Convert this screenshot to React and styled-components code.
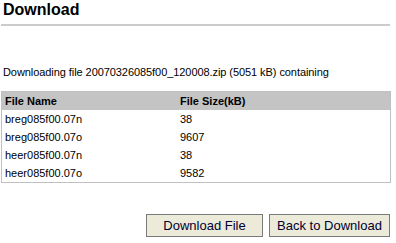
import React from 'react'
import styled, { createGlobalStyle } from 'styled-components'

const GlobalStyle = createGlobalStyle`
  html, body {
    margin: 0;
    padding: 0;
    background: #ffffff;
  }
  body {
    font-family: "Liberation Sans", Arial, sans-serif;
    color: #000000;
  }
`

const Page = styled.div`
  width: 396px;
  height: 243px;
  padding: 0 6px 0 1px;
  box-sizing: border-box;
  overflow: hidden;
`

const Title = styled.h1`
  margin: 0;
  padding: 0 0 0 2px;
  font-size: 16px;
  font-weight: bold;
  line-height: 20px;
  height: 24px;
  border-bottom: 2px solid #cccccc;
`

const Intro = styled.p`
  margin: 0;
  padding: 39px 0 0 2px;
  font-size: 11px;
  line-height: 14px;
  letter-spacing: -0.07px;
`

const Table = styled.table`
  margin-top: 12px;
  width: 390px;
  border-collapse: collapse;
  border: 1px solid #c0c0c0;
  font-size: 11px;
`

const HeadCell = styled.th`
  background: #c4c4c4;
  text-align: left;
  font-weight: bold;
  height: 18px;
  padding: 0 3px;
  width: ${(props) => props.width || 'auto'};
`

const Cell = styled.td`
  height: 18px;
  padding: 0 3px;
`

const Actions = styled.div`
  display: flex;
  justify-content: flex-end;
  gap: 6px;
  margin-top: 31px;
`

const Button = styled.button`
  font-family: "Liberation Sans", Arial, sans-serif;
  font-size: 13px;
  color: #000033;
  background: #ecead8;
  border: 1px solid #7a7a7a;
  height: 23px;
  width: ${(props) => props.width}px;
  padding: 0;
  cursor: pointer;
`

const files = [
  { name: 'breg085f00.07n', size: 38 },
  { name: 'breg085f00.07o', size: 9607 },
  { name: 'heer085f00.07n', size: 38 },
  { name: 'heer085f00.07o', size: 9582 },
]

export default function App() {
  return (
    <Page>
      <GlobalStyle />
      <Title>Download</Title>
      <Intro>Downloading file 20070326085f00_120008.zip (5051 kB) containing</Intro>
      <Table>
        <thead>
          <tr>
            <HeadCell width="169px">File Name</HeadCell>
            <HeadCell>File Size(kB)</HeadCell>
          </tr>
        </thead>
        <tbody>
          {files.map((file) => (
            <tr key={file.name}>
              <Cell>{file.name}</Cell>
              <Cell>{file.size}</Cell>
            </tr>
          ))}
        </tbody>
      </Table>
      <Actions>
        <Button width={117}>Download File</Button>
        <Button width={121}>Back to Download</Button>
      </Actions>
    </Page>
  )
}
